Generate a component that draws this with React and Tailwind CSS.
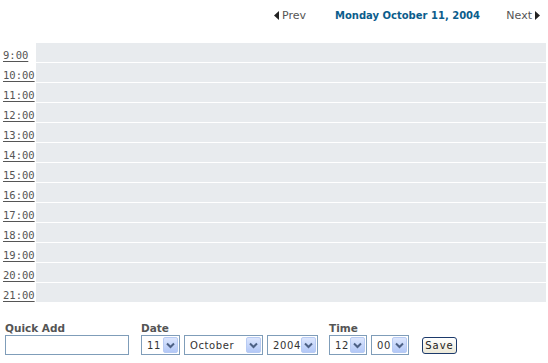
import React from 'react';

const hours = ['9:00', '10:00', '11:00', '12:00', '13:00', '14:00', '15:00', '16:00', '17:00', '18:00', '19:00', '20:00', '21:00'];

const Arrow = () => (
  <span className="flex h-[16px] w-[15px] shrink-0 items-center justify-center rounded-[2px] border border-[#b8cbf3] bg-gradient-to-b from-[#dce6fd] to-[#b3c8f7]">
    <svg width="9" height="7" viewBox="0 0 9 7">
      <path d="M1 1.5 L4.5 5 L8 1.5" fill="none" stroke="#4d6185" strokeWidth="2" />
    </svg>
  </span>
);

const FakeSelect = ({ value, width }) => (
  <div
    className={`flex h-[20px] shrink-0 items-center justify-between border border-[#7f9db9] bg-white pl-[5px] pr-[1px] text-[10px] leading-[13px] text-[#333] ${width}`}
  >
    <span className="whitespace-nowrap tracking-[0.6px]">{value}</span>
    <Arrow />
  </div>
);

export default function App() {
  return (
    <div className="h-[363px] w-[548px] bg-white" style={{ fontFamily: '"DejaVu Sans", Verdana, sans-serif' }}>
      {/* Nav */}
      <div className="flex h-[43px] items-start pt-[9px] text-[11px] leading-[13px]">
        <div className="ml-[274px] flex items-center gap-[3px] text-[#555]">
          <svg width="5" height="9" viewBox="0 0 5 9"><path d="M5 0 L0 4.5 L5 9 Z" fill="#222" /></svg>
          <span>Prev</span>
        </div>
        <div className="ml-[29px] text-[10px] font-bold text-[#0b5d8c]">Monday October 11, 2004</div>
        <div className="ml-auto mr-[8px] flex items-center gap-[3px] text-[#555]">
          <span>Next</span>
          <svg width="5" height="9" viewBox="0 0 5 9"><path d="M0 0 L5 4.5 L0 9 Z" fill="#222" /></svg>
        </div>
      </div>

      {/* Hours */}
      <div className="flex flex-col">
        {hours.map((h) => (
          <div key={h} className="flex h-[20px]">
            <div className="flex w-[36px] items-end pb-[1px] pl-[3px]">
              <a
                href="#"
                className="text-[10.5px] leading-[13px] text-[#555] underline underline-offset-[2px]"
                style={{ fontFamily: '"DejaVu Sans Mono", "Liberation Mono", monospace' }}
              >
                {h}
              </a>
            </div>
            <div className="mr-[2px] h-[19px] flex-1 bg-[#e8ebee]" />
          </div>
        ))}
      </div>

      {/* Quick add form */}
      <div className="mt-[19px] flex items-end">
        <div className="ml-[5px] flex flex-col">
          <span className="h-[13px] text-[10.5px] font-bold leading-[12px] text-[#555]">Quick Add</span>
          <div className="h-[20px] w-[124px] border border-[#7f9db9] bg-white" />
        </div>
        <div className="ml-[12px] flex flex-col">
          <span className="h-[13px] text-[10.5px] font-bold leading-[12px] text-[#555]">Date</span>
          <div className="flex gap-[4px]">
            <FakeSelect value="11" width="w-[39px]" />
            <FakeSelect value="October" width="w-[79px]" />
            <FakeSelect value="2004" width="w-[51px]" />
          </div>
        </div>
        <div className="ml-[11px] flex flex-col">
          <span className="h-[13px] text-[10.5px] font-bold leading-[12px] text-[#555]">Time</span>
          <div className="flex gap-[4px]">
            <FakeSelect value="12" width="w-[38px]" />
            <FakeSelect value="00" width="w-[38px]" />
          </div>
        </div>
        <button className="mb-[1px] ml-[13px] h-[17px] w-[35px] rounded-[3px] border border-[#1c3a6b] bg-gradient-to-b from-white to-[#ece9d8] text-[10px] leading-[13px] tracking-[1px] text-[#222]">
          Save
        </button>
      </div>
    </div>
  );
}
